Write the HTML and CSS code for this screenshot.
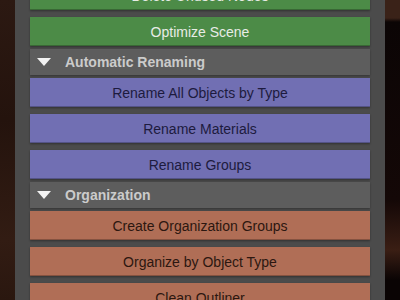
FILE: index.html
```html
<!DOCTYPE html>
<html lang="en">
<head>
    <meta charset="UTF-8">
    <meta name="viewport" content="width=device-width, initial-scale=1.0">
    <title>Scene Tools</title>
    <link rel="stylesheet" href="styles.css">
</head>
<body>
    <!-- Tool panel -->
    <div class="panel">
        <!-- Cleanup -->
        <button class="tool green">Delete Unused Nodes</button>
        <button class="tool green">Optimize Scene</button>

        <!-- Renaming -->
        <div class="header"><span class="arrow"></span>Automatic Renaming</div>
        <button class="tool purple">Rename All Objects by Type</button>
        <button class="tool purple">Rename Materials</button>
        <button class="tool purple">Rename Groups</button>

        <!-- Organization -->
        <div class="header"><span class="arrow"></span>Organization</div>
        <button class="tool orange">Create Organization Groups</button>
        <button class="tool orange">Organize by Object Type</button>
        <button class="tool orange">Clean Outliner</button>
    </div>
</body>
</html>
```

FILE: styles.css
```css
body {
    margin: 0;
    height: 300px;
    overflow: hidden;
    font-family: "Liberation Sans", Arial, sans-serif;
    background:
        linear-gradient(to right, transparent 15px, #4b4b4b 15px, #4b4b4b 385px, transparent 385px),
        linear-gradient(to bottom, #3a2218 0, #3a2218 18px, #0b0505 22px, #140807 200px, #3a1e14 250px, #0a0404 280px);
    background-color: #2a1811;
}
body::before {
    /* left strip, a little warmer */
    content: "";
    position: fixed;
    left: 0;
    top: 0;
    width: 15px;
    height: 300px;
    background: linear-gradient(to bottom, #2c1912, #24130d 120px, #321c13 240px, #2a170f);
}
.panel {
    width: 340px;
    margin: -19px 0 0 30px;
    display: flex;
    flex-direction: column;
}
.tool {
    height: 29px;
    border: none;
    border-bottom: 1px solid rgba(0, 0, 0, 0.25);
    margin: 0 0 7px;
    padding: 2px 0 0;
    font-family: inherit;
    font-size: 14px;
    text-align: center;
    box-shadow: 0 1px 2px rgba(0, 0, 0, 0.35);
}
.green {
    background-color: #4c8b47;
    color: #e8ece6;
}
.purple {
    background-color: #716fb3;
    color: #1d1b3e;
}
.orange {
    background-color: #b06e56;
    color: #2c1710;
}
/* section title row */
.header {
    height: 26px;
    margin: -4px 0 3px;
    background-color: #5d5d5d;
    color: #cbcbcb;
    font-weight: bold;
    font-size: 14px;
    display: flex;
    align-items: center;
    box-shadow: 0 1px 2px rgba(0, 0, 0, 0.3);
}
.arrow {
    width: 0;
    height: 0;
    margin: 0 14px 0 7px;
    border-left: 7px solid transparent;
    border-right: 7px solid transparent;
    border-top: 8px solid #f2f2f2;
}
```
